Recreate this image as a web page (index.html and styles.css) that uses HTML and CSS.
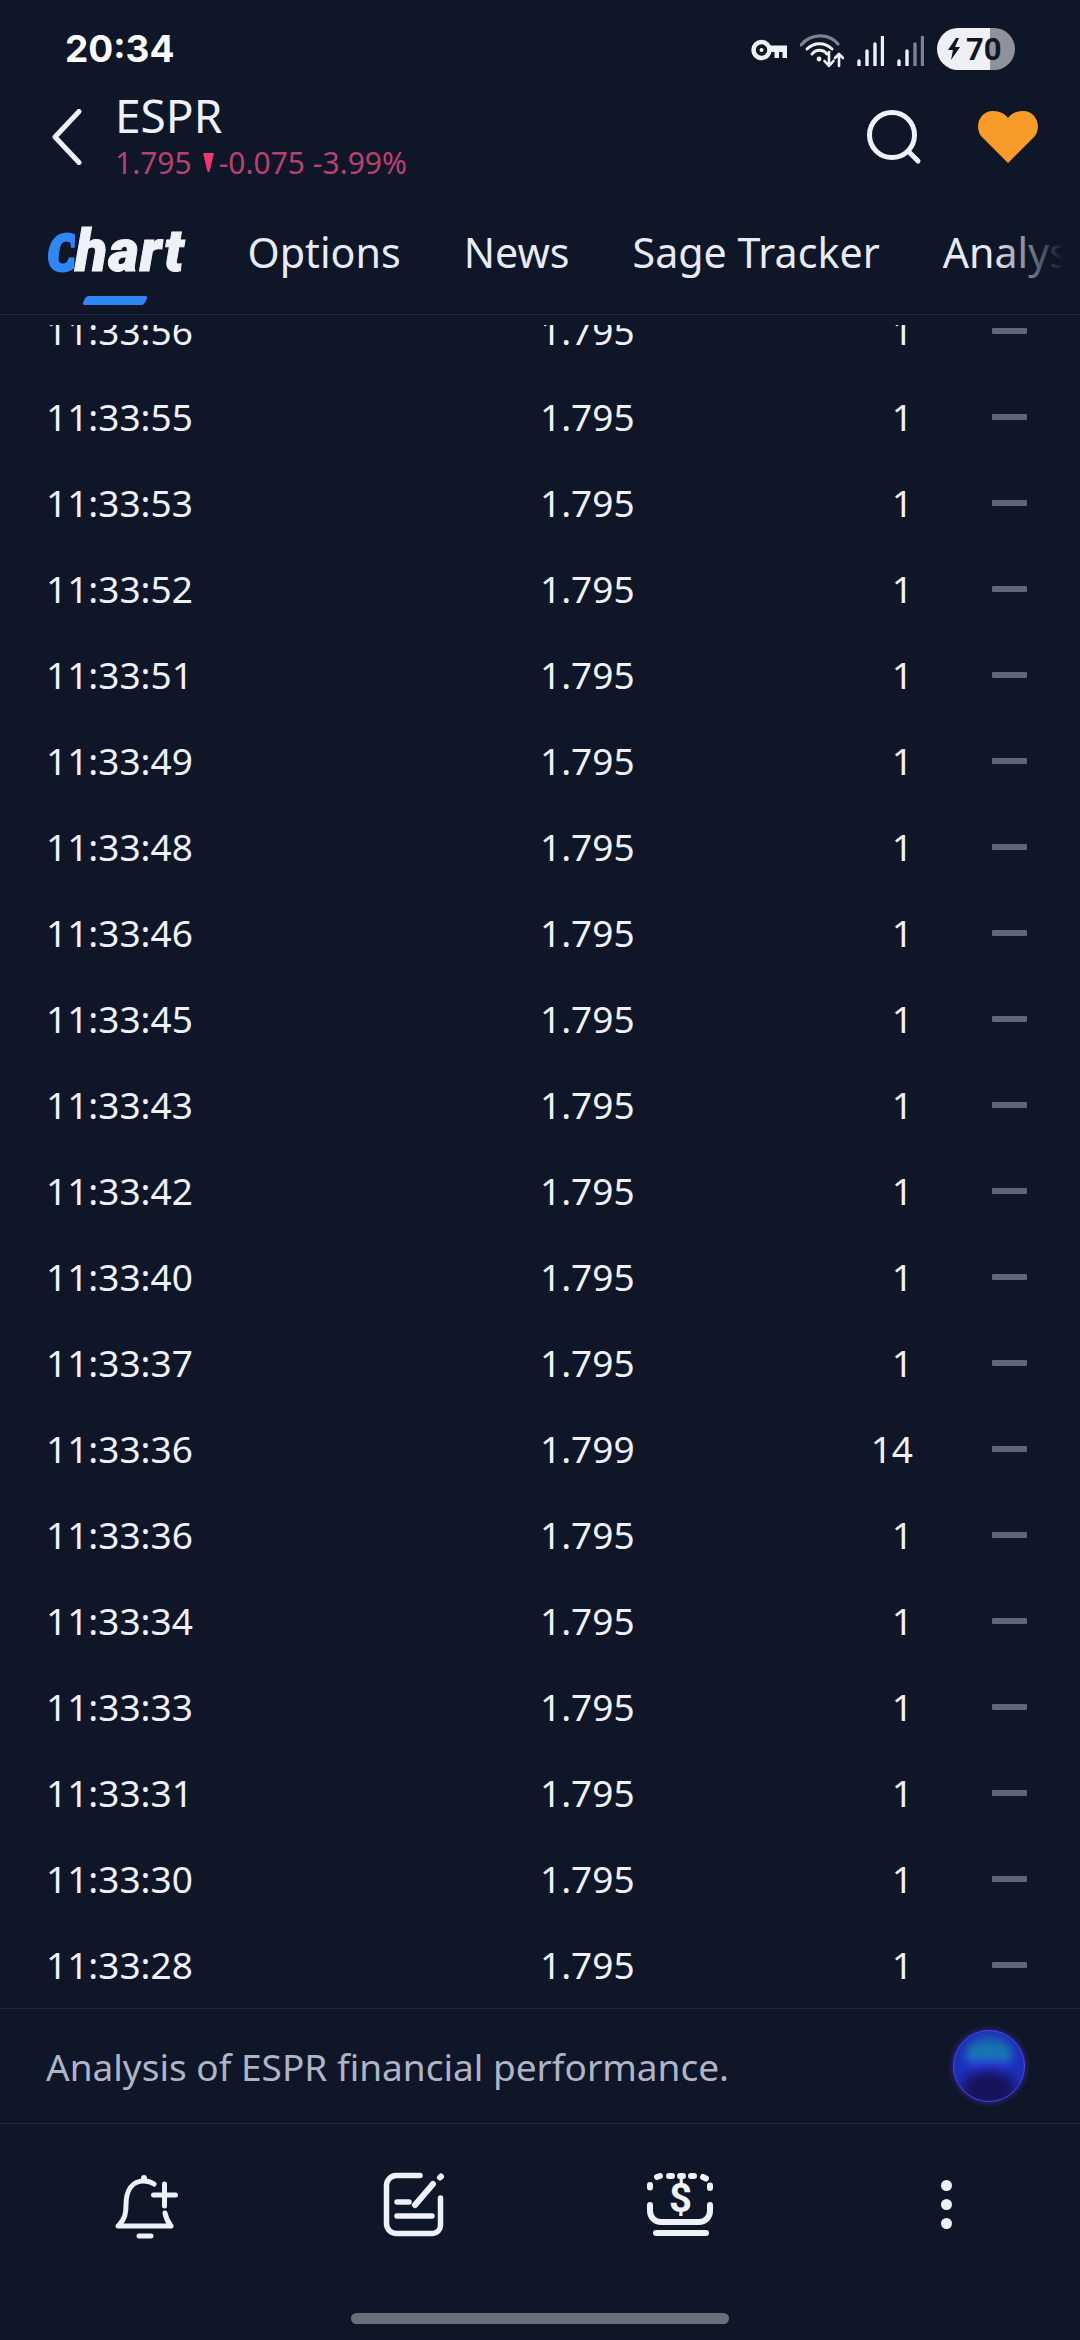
FILE: index.html
```html
<!DOCTYPE html>
<html lang="en">
<head>
<meta charset="utf-8">
<title>ESPR</title>
<link rel="stylesheet" href="styles.css">
</head>
<body>
<div class="screen">
  <div class="status">
    <span class="clock">20:34</span>
    <div class="status-icons">
      <svg class="i-key" width="36" height="22" viewBox="0 0 36 22"><circle cx="10.500" cy="11" r="8" class="ln" stroke-width="4.500"/><circle cx="10.500" cy="11" r="2" class="fl"/><path d="M17 6.500H36V19H31.500V13H28V19H23.500V13H17Z" class="fl"/></svg>
      <svg class="i-wifi" width="44" height="34" viewBox="0 0 44 34"><path d="M1 11C11 -1 29 -1 38 10" class="ln dim" stroke-width="3.200"/><path d="M7 15C14 8 25 8 32 15" class="ln" stroke-width="3"/><path d="M12 20C16 15 23 15 27 20" class="ln" stroke-width="3"/><circle cx="19" cy="25" r="2.400" class="fl"/><path d="M29 18V32M24.500 27L29 32L33.500 27" class="ln" stroke-width="2.600"/><path d="M39 32V20M35 24L39 20L43 24" class="ln" stroke-width="2.600"/></svg>
      <svg class="i-sig" width="27" height="30" viewBox="0 0 27 30"><path d="M2 25V29M10 15V29M18 8V29M25.500 1V29" class="ln" stroke-width="3.400"/></svg>
      <svg class="i-sig" width="27" height="30" viewBox="0 0 27 30"><path d="M2 25V29M10 15V29" class="ln" stroke-width="3.400"/><path d="M18 8V29M25.500 1V29" class="ln dim" stroke-width="3.400"/></svg>
      <div class="battery">
        <svg width="14" height="22" viewBox="0 0 14 22"><path d="M9 0L1 12H6L4 22L13 9H8L12 0Z" class="bolt"/></svg>
        <span>70</span>
      </div>
    </div>
  </div>

  <header class="top">
    <svg class="back" width="30" height="56" viewBox="0 0 30 56"><path d="M27 2.500L3 28L27 53.500" class="ln" stroke-width="5"/></svg>
    <div class="quote">
      <div class="sym">ESPR</div>
      <div class="chg"><span>1.795</span><svg class="tri" width="13" height="21" viewBox="0 0 13 21"><path d="M1 1H12L7.500 19.500Q6.500 21 5.500 19.500Z"/></svg><span>-0.075 -3.99%</span></div>
    </div>
    <div class="top-actions">
      <svg width="56" height="56" viewBox="0 0 56 56"><circle cx="26" cy="26" r="22.500" class="ln" stroke-width="5"/><path d="M43 43L52 52" class="ln" stroke-width="5"/></svg>
      <svg width="62" height="54" viewBox="0 0 62 54"><path d="M31 53L4 26C-3 16 3 1 16 1C23 1 28 4 31 8C34 4 39 1 46 1C59 1 65 16 58 26Z" class="heart"/></svg>
    </div>
  </header>

  <nav class="tabs">
    <div class="tab tab-on"><span class="c">C</span><span class="h">hart</span></div>
    <div class="tab">Options</div>
    <div class="tab">News</div>
    <div class="tab">Sage Tracker</div>
    <div class="tab">Analysis</div>
  </nav>

  <main class="list">
    <div class="rows">
      <div class="row"><span>11:33:56</span><span>1.795</span><span class="q">1</span><span class="dash"></span></div>
      <div class="row"><span>11:33:55</span><span>1.795</span><span class="q">1</span><span class="dash"></span></div>
      <div class="row"><span>11:33:53</span><span>1.795</span><span class="q">1</span><span class="dash"></span></div>
      <div class="row"><span>11:33:52</span><span>1.795</span><span class="q">1</span><span class="dash"></span></div>
      <div class="row"><span>11:33:51</span><span>1.795</span><span class="q">1</span><span class="dash"></span></div>
      <div class="row"><span>11:33:49</span><span>1.795</span><span class="q">1</span><span class="dash"></span></div>
      <div class="row"><span>11:33:48</span><span>1.795</span><span class="q">1</span><span class="dash"></span></div>
      <div class="row"><span>11:33:46</span><span>1.795</span><span class="q">1</span><span class="dash"></span></div>
      <div class="row"><span>11:33:45</span><span>1.795</span><span class="q">1</span><span class="dash"></span></div>
      <div class="row"><span>11:33:43</span><span>1.795</span><span class="q">1</span><span class="dash"></span></div>
      <div class="row"><span>11:33:42</span><span>1.795</span><span class="q">1</span><span class="dash"></span></div>
      <div class="row"><span>11:33:40</span><span>1.795</span><span class="q">1</span><span class="dash"></span></div>
      <div class="row"><span>11:33:37</span><span>1.795</span><span class="q">1</span><span class="dash"></span></div>
      <div class="row"><span>11:33:36</span><span>1.799</span><span class="q">14</span><span class="dash"></span></div>
      <div class="row"><span>11:33:36</span><span>1.795</span><span class="q">1</span><span class="dash"></span></div>
      <div class="row"><span>11:33:34</span><span>1.795</span><span class="q">1</span><span class="dash"></span></div>
      <div class="row"><span>11:33:33</span><span>1.795</span><span class="q">1</span><span class="dash"></span></div>
      <div class="row"><span>11:33:31</span><span>1.795</span><span class="q">1</span><span class="dash"></span></div>
      <div class="row"><span>11:33:30</span><span>1.795</span><span class="q">1</span><span class="dash"></span></div>
      <div class="row"><span>11:33:28</span><span>1.795</span><span class="q">1</span><span class="dash"></span></div>
    </div>
  </main>

  <section class="ask">
    <span>Analysis of ESPR financial performance.</span>
    <div class="orb"><div class="orb-glow"></div></div>
  </section>

  <footer class="actions">
    <div class="act"><svg width="70" height="70" viewBox="0 0 70 70"><path d="M7 57H60M8 56C14 50 15 44 15 36C15 20 22 12 33 12C37 12 40 13 43 15M54 44C55 50 57 53 60 57M53.500 15V37M42.500 26H64.500M28 67H40" class="ln" stroke-width="5"/><circle cx="33" cy="9" r="3" class="fl"/></svg></div>
    <div class="act"><svg width="70" height="70" viewBox="0 0 70 70"><path d="M42 6.500H18A10 10 0 0 0 8.500 16.500V54.500A10 10 0 0 0 18.500 64.500H55A8 8 0 0 0 62.500 56.500V29" class="ln" stroke-width="5.500"/><path d="M37 36L55 15M62 8.500L63 7.500" class="ln" stroke-width="6"/><path d="M19 33H31M19 47H54" class="ln" stroke-width="5.500"/></svg></div>
    <div class="act"><svg width="70" height="70" viewBox="0 0 70 70"><path d="M5 36V42A11 11 0 0 0 16 53H54A11 11 0 0 0 65 42V36" class="ln" stroke-width="6"/><path d="M11 64H61" class="ln" stroke-width="6"/><path d="M5 16V18.500M12 8L15 7M24 7H27M35 7H38M46 7H49M58 8L61 9.500M65 16.500V19" class="ln" stroke-width="6"/><text x="35.500" y="43" text-anchor="middle" class="dollar">$</text></svg></div>
    <div class="act dots"><span></span><span></span><span></span></div>
  </footer>

  <div class="home"><span></span></div>
</div>
</body>
</html>
```

FILE: styles.css
```css
* { box-sizing: border-box; }
html, body { margin: 0; padding: 0; }
body {
  background: #0f1627;
  color: #eef1f8;
  font-family: "Noto Sans", "Open Sans", sans-serif;
}
.screen {
  width: 1080px;
  height: 2340px;
  display: flex;
  flex-direction: column;
  overflow: hidden;
  background: #0f1627;
}
.ln { fill: none; stroke: #eef1f8; stroke-linecap: round; stroke-linejoin: round; }
.fl { fill: #eef1f8; }
.dim { stroke: #7c8291; }

.status {
  height: 84px;
  flex: none;
  display: flex;
  align-items: flex-start;
  justify-content: space-between;
  padding: 28px 65px 0 65px;
}
.clock {
  font-family: Inter, Roboto, sans-serif;
  font-weight: 700;
  font-size: 37px;
  line-height: 42px;
  color: #fff;
}
.status-icons {
  display: flex;
  align-items: center;
  gap: 13px;
  height: 42px;
}
.i-sig { margin-top: 3px; }
.i-wifi { margin-top: 4px; }
.i-key { margin-top: 1px; }
.battery {
  width: 78px;
  height: 42px;
  border-radius: 21px;
  display: flex;
  align-items: center;
  gap: 5px;
  padding-left: 10px;
  background: linear-gradient(90deg, #eff0f4 0 53px, #8f919b 53px);
  color: #0f1627;
  font-family: Roboto, Inter, sans-serif;
  font-weight: 700;
  font-size: 31px;
}
.bolt { fill: #0f1627; }

.top {
  height: 106px;
  flex: none;
  display: flex;
  align-items: center;
  padding: 0 41px 0 52px;
}
.back { flex: none; }
.quote { margin-left: 33px; margin-top: -1px; }
.sym {
  font-size: 46px;
  line-height: 50px;
  margin-top: -3px;
  font-weight: 400;
  color: #eef1f8;
}
.chg {
  display: flex;
  align-items: center;
  gap: 7px;
  margin-top: 5px;
  font-size: 30px;
  line-height: 36px;
  color: #b9406f;
  font-weight: 400;
}
.tri { fill: #f0386b; margin-left: 3px; margin-right: -3px; }
.top-actions {
  margin-left: auto;
  display: flex;
  align-items: center;
  gap: 55px;
}
.heart { fill: #f99b28; }

.tabs {
  height: 125px;
  flex: none;
  display: flex;
  align-items: center;
  gap: 63px;
  padding: 0 0 0 47px;
  border-bottom: 1px solid #232a3b;
  white-space: nowrap;
  overflow: hidden;
  position: relative;
  font-size: 41.200px;
  font-weight: 400;
  color: #e6ebf5;
}
.tabs::after {
  content: "";
  position: absolute;
  top: 0;
  bottom: 1px;
  right: 0;
  width: 85px;
  background: linear-gradient(90deg, rgba(15,22,39,0), #0f1627 80%);
}
.tab { flex: none; line-height: 56px; }
.tab-on {
  position: relative;
  font-family: Roboto, sans-serif;
  font-weight: 900;
  font-style: italic;
  font-size: 59px;
  letter-spacing: 1px;
  color: #eef1f8;
  -webkit-text-stroke: 1px #eef1f8;
}
.tab-on .c {
  display: inline-block;
  color: #2f86f6;
  -webkit-text-stroke: 2px #2f86f6;
  font-size: 52px;
  letter-spacing: -5px;
  clip-path: polygon(-20% -20%, 102% -20%, 94% 120%, -20% 120%);
}
.tab-on::after {
  content: "";
  position: absolute;
  left: 37px;
  bottom: -23px;
  width: 62px;
  height: 9px;
  background: #2f86f6;
  border-radius: 3px;
  transform: skewX(-25deg);
}

.list {
  height: 1693px;
  flex: none;
  overflow: hidden;
}
.rows { margin-top: -27px; }
.row {
  height: 86px;
  display: grid;
  grid-template-columns: 494px 92px 181px 100px 79px 35px;
  align-items: center;
  padding-left: 46px;
  font-size: 37px;
  line-height: 50px;
  font-weight: 400;
  color: #eef1f8;
}
.row:first-child { clip-path: inset(37px 0 0 0); }
.q { grid-column: 4; text-align: right; }
.dash {
  grid-column: 6;
  height: 6px;
  background: #5f6678;
  border-radius: 1px;
}

.ask {
  height: 116px;
  flex: none;
  display: flex;
  align-items: center;
  justify-content: space-between;
  padding: 0 55px 0 46px;
  border-top: 1px solid #222939;
  border-bottom: 1px solid #222939;
  font-size: 37px;
  font-weight: 400;
  color: #aeb5c7;
}
.orb {
  width: 72px;
  height: 72px;
  border-radius: 50%;
  position: relative;
  overflow: hidden;
  border: 1.500px solid #4b45e6;
  box-shadow: 0 0 5px 2px rgba(55, 45, 180, .55);
  background: #1c30bb;
}
.orb-glow {
  position: absolute;
  left: 12px;
  top: 5px;
  width: 46px;
  height: 36px;
  border-radius: 50% 50% 40% 40%;
  background: linear-gradient(180deg, #1a5aa8, #1680b6 55%, #3022e6 90%);
  filter: blur(4px);
}
.orb::after {
  content: "";
  position: absolute;
  left: 7px;
  right: 7px;
  top: 40px;
  height: 38px;
  border-radius: 50%;
  background: #17125a;
  filter: blur(6px);
}

.actions {
  height: 160px;
  flex: none;
  display: flex;
  align-items: flex-start;
  padding: 45px 0 0 12px;
}
.act {
  width: 267px;
  height: 70px;
  display: flex;
  justify-content: center;
  align-items: center;
}
.dots { flex-direction: column; gap: 8px; }
.dots span {
  width: 11px;
  height: 11px;
  border-radius: 50%;
  background: #eef1f8;
}
.dollar {
  font-family: Roboto, sans-serif;
  font-weight: 700;
  font-size: 40px;
  fill: #eef1f8;
}
.home {
  flex: 1;
  display: flex;
  justify-content: center;
  padding-top: 29px;
}
.home span {
  width: 378px;
  height: 11px;
  border-radius: 6px;
  background: #6b6f7b;
}
```
